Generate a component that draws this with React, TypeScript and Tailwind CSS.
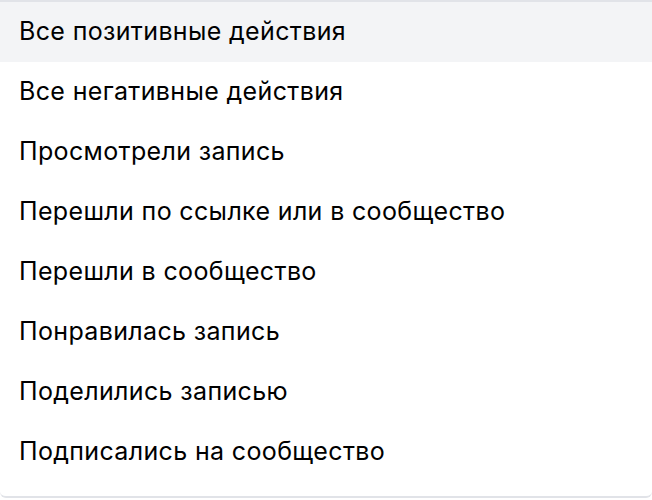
import React from 'react';

const items = [
    'Все позитивные действия',
    'Все негативные действия',
    'Просмотрели запись',
    'Перешли по ссылке или в сообщество',
    'Перешли в сообщество',
    'Понравилась запись',
    'Поделились записью',
    'Подписались на сообщество',
];

export default function App() {
    return (
        <div className="w-[652px] h-[500px] bg-white" style={{ fontFamily: 'Inter, "Liberation Sans", sans-serif' }}>
            <div className="h-[498px] border-t-2 border-b-[2px] border-[#e1e3e8] rounded-b-[6px] flex flex-col">
                {items.map((label, i) => (
                    <div
                        key={label}
                        className={`h-[60px] flex items-center px-[19px] text-[25px] tracking-[0.35px] text-black ${i === 0 ? 'bg-[#f3f4f6]' : 'bg-white'}`}
                    >
                        {label}
                    </div>
                ))}
            </div>
        </div>
    );
}
